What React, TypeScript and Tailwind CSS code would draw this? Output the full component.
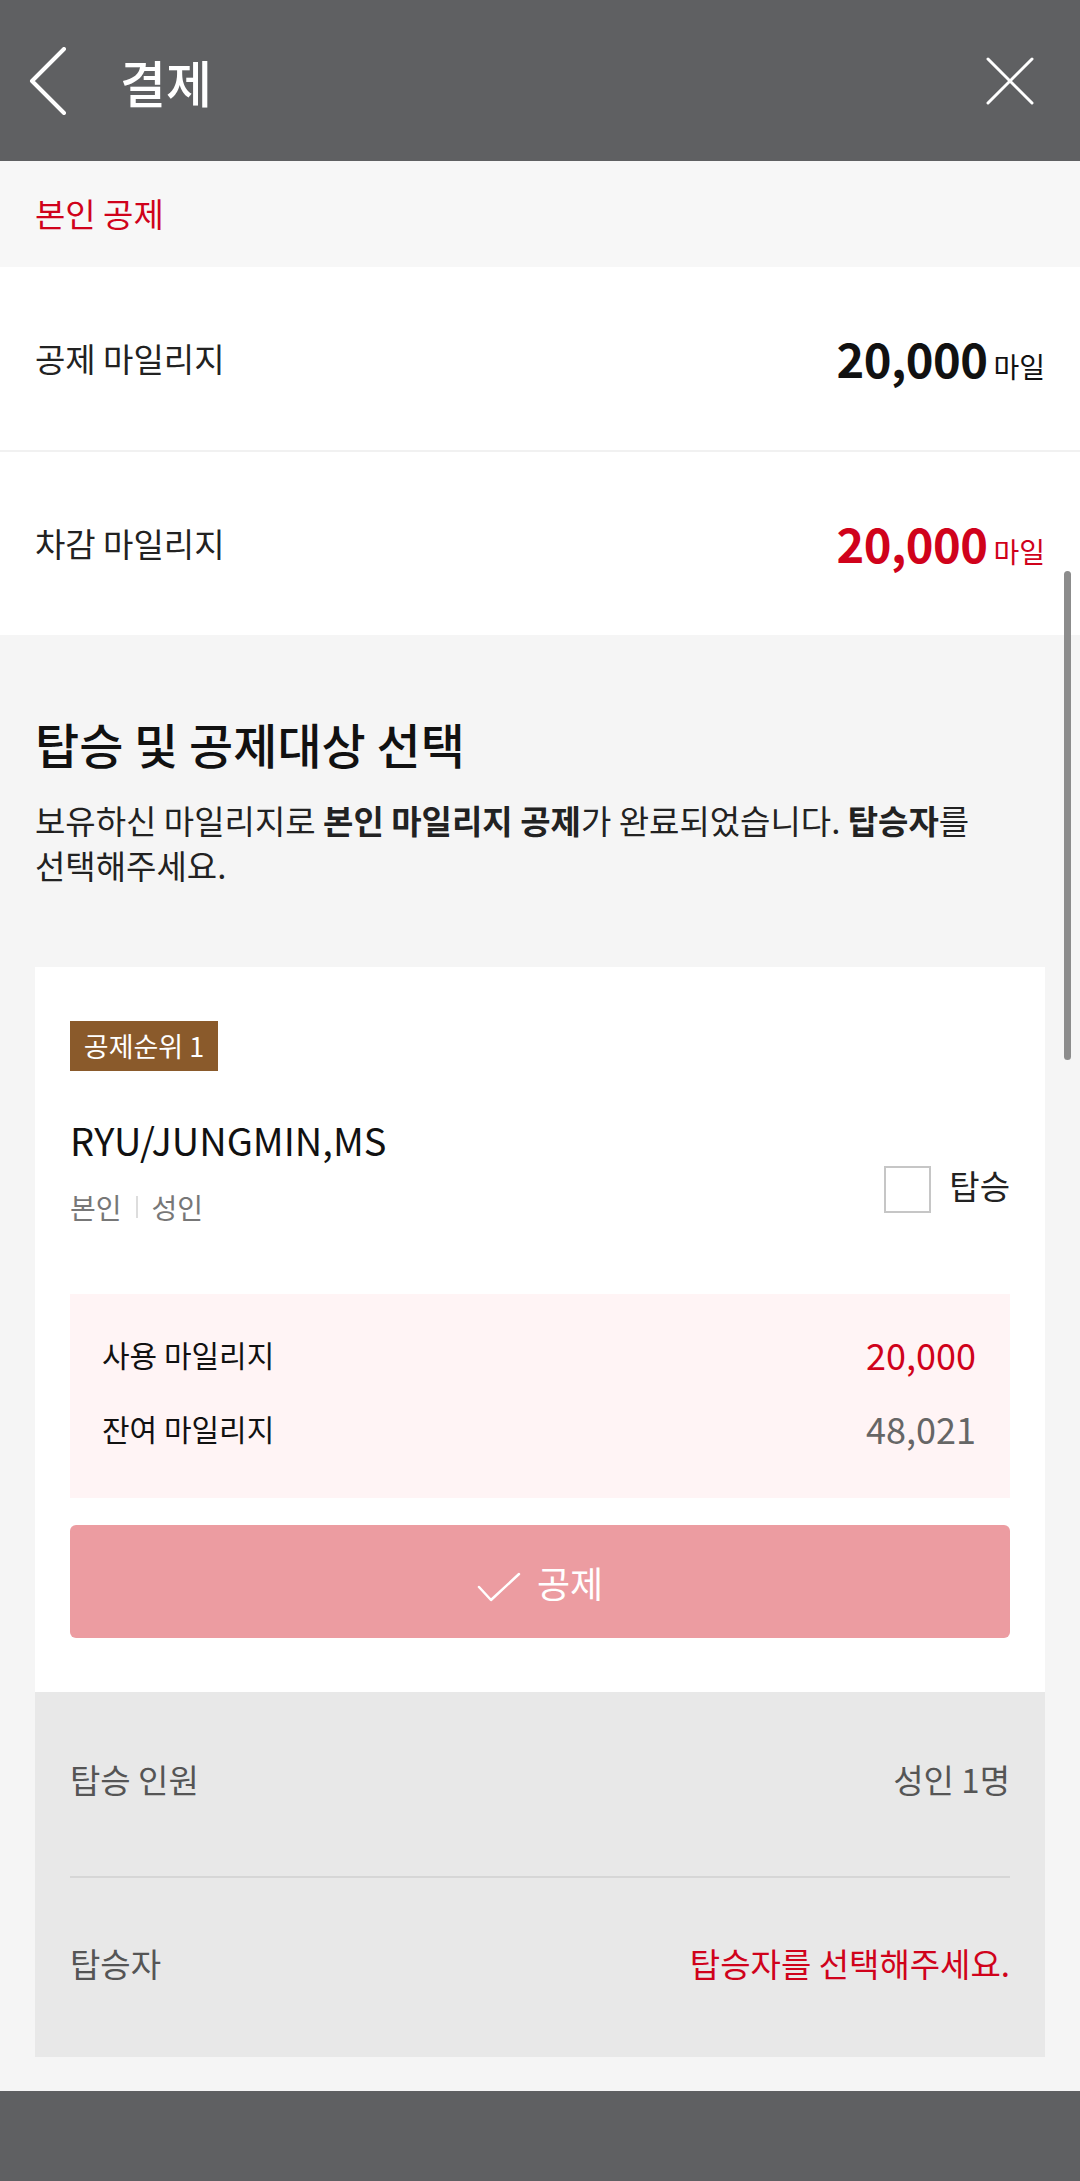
const font = { fontFamily: '"Noto Sans CJK KR", "Noto Sans", sans-serif' };

function Header() {
  return (
    <header className="flex h-[161px] items-center bg-[#5f6062] text-white">
      <button className="ml-[29px] flex h-[68px] w-[38px] items-center justify-center">
        <svg width="38" height="68" viewBox="0 0 38 68" fill="none">
          <polyline points="35,2 3,34 35,66" stroke="white" strokeWidth="4" strokeLinecap="round" strokeLinejoin="round" />
        </svg>
      </button>
      <h1 className="ml-[53px] text-[50px] font-medium leading-none">결제</h1>
      <button className="ml-auto mr-[46px] flex h-[48px] w-[48px] items-center justify-center">
        <svg width="48" height="48" viewBox="0 0 48 48" fill="none">
          <path d="M2 2 L46 46 M46 2 L2 46" stroke="white" strokeWidth="3" strokeLinecap="round" />
        </svg>
      </button>
    </header>
  );
}

function MileRow({ label, value, red }: { label: string; value: string; red?: boolean }) {
  return (
    <div className="flex h-[183px] items-center justify-between bg-white px-[35px]">
      <span className="text-[33px] text-[#222]">{label}</span>
      <span className={red ? "flex items-baseline text-[#d0021b]" : "flex items-baseline text-[#111]"}>
        <span className="text-[47px] font-bold tracking-[-0.5px]">{value}</span>
        <span className="ml-[6px] text-[28px]">마일</span>
      </span>
    </div>
  );
}

export default function App() {
  return (
    <div className="relative min-h-[2181px] bg-[#f5f5f5]" style={font}>
      <Header />

      <div className="flex h-[106px] items-center bg-[#f7f7f7] px-[35px]">
        <span className="text-[33px] text-[#d0021b]">본인 공제</span>
      </div>

      <MileRow label="공제 마일리지" value="20,000" />
      <div className="h-[2px] bg-[#f1f1f1]" />
      <MileRow label="차감 마일리지" value="20,000" red />

      <section className="bg-[#f5f5f5] px-[35px] pt-[80px] pb-[34px]">
        <h2 className="text-[48px] font-medium leading-[57px] text-[#111]">탑승 및 공제대상 선택</h2>
        <p className="mt-[26px] text-[33px] leading-[45px] text-[#222]">
          보유하신 마일리지로 <b className="font-bold">본인 마일리지 공제</b>가 완료되었습니다. <b className="font-bold">탑승자</b>를
          <br />
          선택해주세요.
        </p>

        <div className="mt-[79px] bg-white px-[35px] pt-[54px] pb-[54px]">
          <span className="inline-flex h-[50px] w-[148px] items-center justify-center bg-[#8a5a2b] text-[27px] text-white">
            공제순위 1
          </span>

          <div className="mt-[46px] flex items-end justify-between">
            <div>
              <div className="text-[38px] leading-[46px] text-[#111]">RYU/JUNGMIN,MS</div>
              <div className="mt-[26px] flex items-center text-[28px] leading-[36px] text-[#777]">
                <span>본인</span>
                <span className="mx-[14px] h-[22px] w-[2px] bg-[#ddd]" />
                <span>성인</span>
              </div>
            </div>
            <label className="mb-[11px] flex items-center">
              <span className="h-[47px] w-[47px] border-2 border-[#c6c6c6] bg-white" />
              <span className="ml-[18px] -translate-y-[4px] text-[33px] text-[#222]">탑승</span>
            </label>
          </div>

          <div className="mt-[69px] bg-[#fff4f5] pt-[40px] pb-[50px] pl-[32px] pr-[34px]">
            <div className="flex h-[40px] items-center justify-between">
              <span className="text-[30px] text-[#111]">사용 마일리지</span>
              <span className="text-[36px] text-[#d0021b]">20,000</span>
            </div>
            <div className="mt-[34px] flex h-[40px] items-center justify-between">
              <span className="text-[30px] text-[#111]">잔여 마일리지</span>
              <span className="text-[36px] text-[#666]">48,021</span>
            </div>
          </div>

          <button className="mt-[27px] flex h-[113px] w-full items-center justify-center rounded-[6px] bg-[#ec9ca1] text-white">
            <svg width="44" height="30" viewBox="0 0 44 30" fill="none" className="mr-[16px] mt-[10px]">
              <polyline points="2,15 14,28 42,2" stroke="white" strokeWidth="2.5" strokeLinecap="round" strokeLinejoin="round" />
            </svg>
            <span className="text-[36px] leading-none">공제</span>
          </button>
        </div>

        <div className="bg-[#e8e8e8] px-[35px]">
          <div className="flex h-[184px] items-center justify-between pb-[8px]">
            <span className="text-[33px] text-[#555]">탑승 인원</span>
            <span className="text-[33px] text-[#555]">성인 1명</span>
          </div>
          <div className="h-[2px] bg-[#d6d6d6]" />
          <div className="flex h-[179px] items-center justify-between pb-[8px]">
            <span className="text-[33px] text-[#555]">탑승자</span>
            <span className="text-[33px] text-[#d0021b]">탑승자를 선택해주세요.</span>
          </div>
        </div>
      </section>

      <footer className="h-[91px] bg-[#5f6062]" />

      <div className="absolute right-[9px] top-[571px] h-[489px] w-[7px] rounded-full bg-[#8c8c8c]" />
    </div>
  );
}
